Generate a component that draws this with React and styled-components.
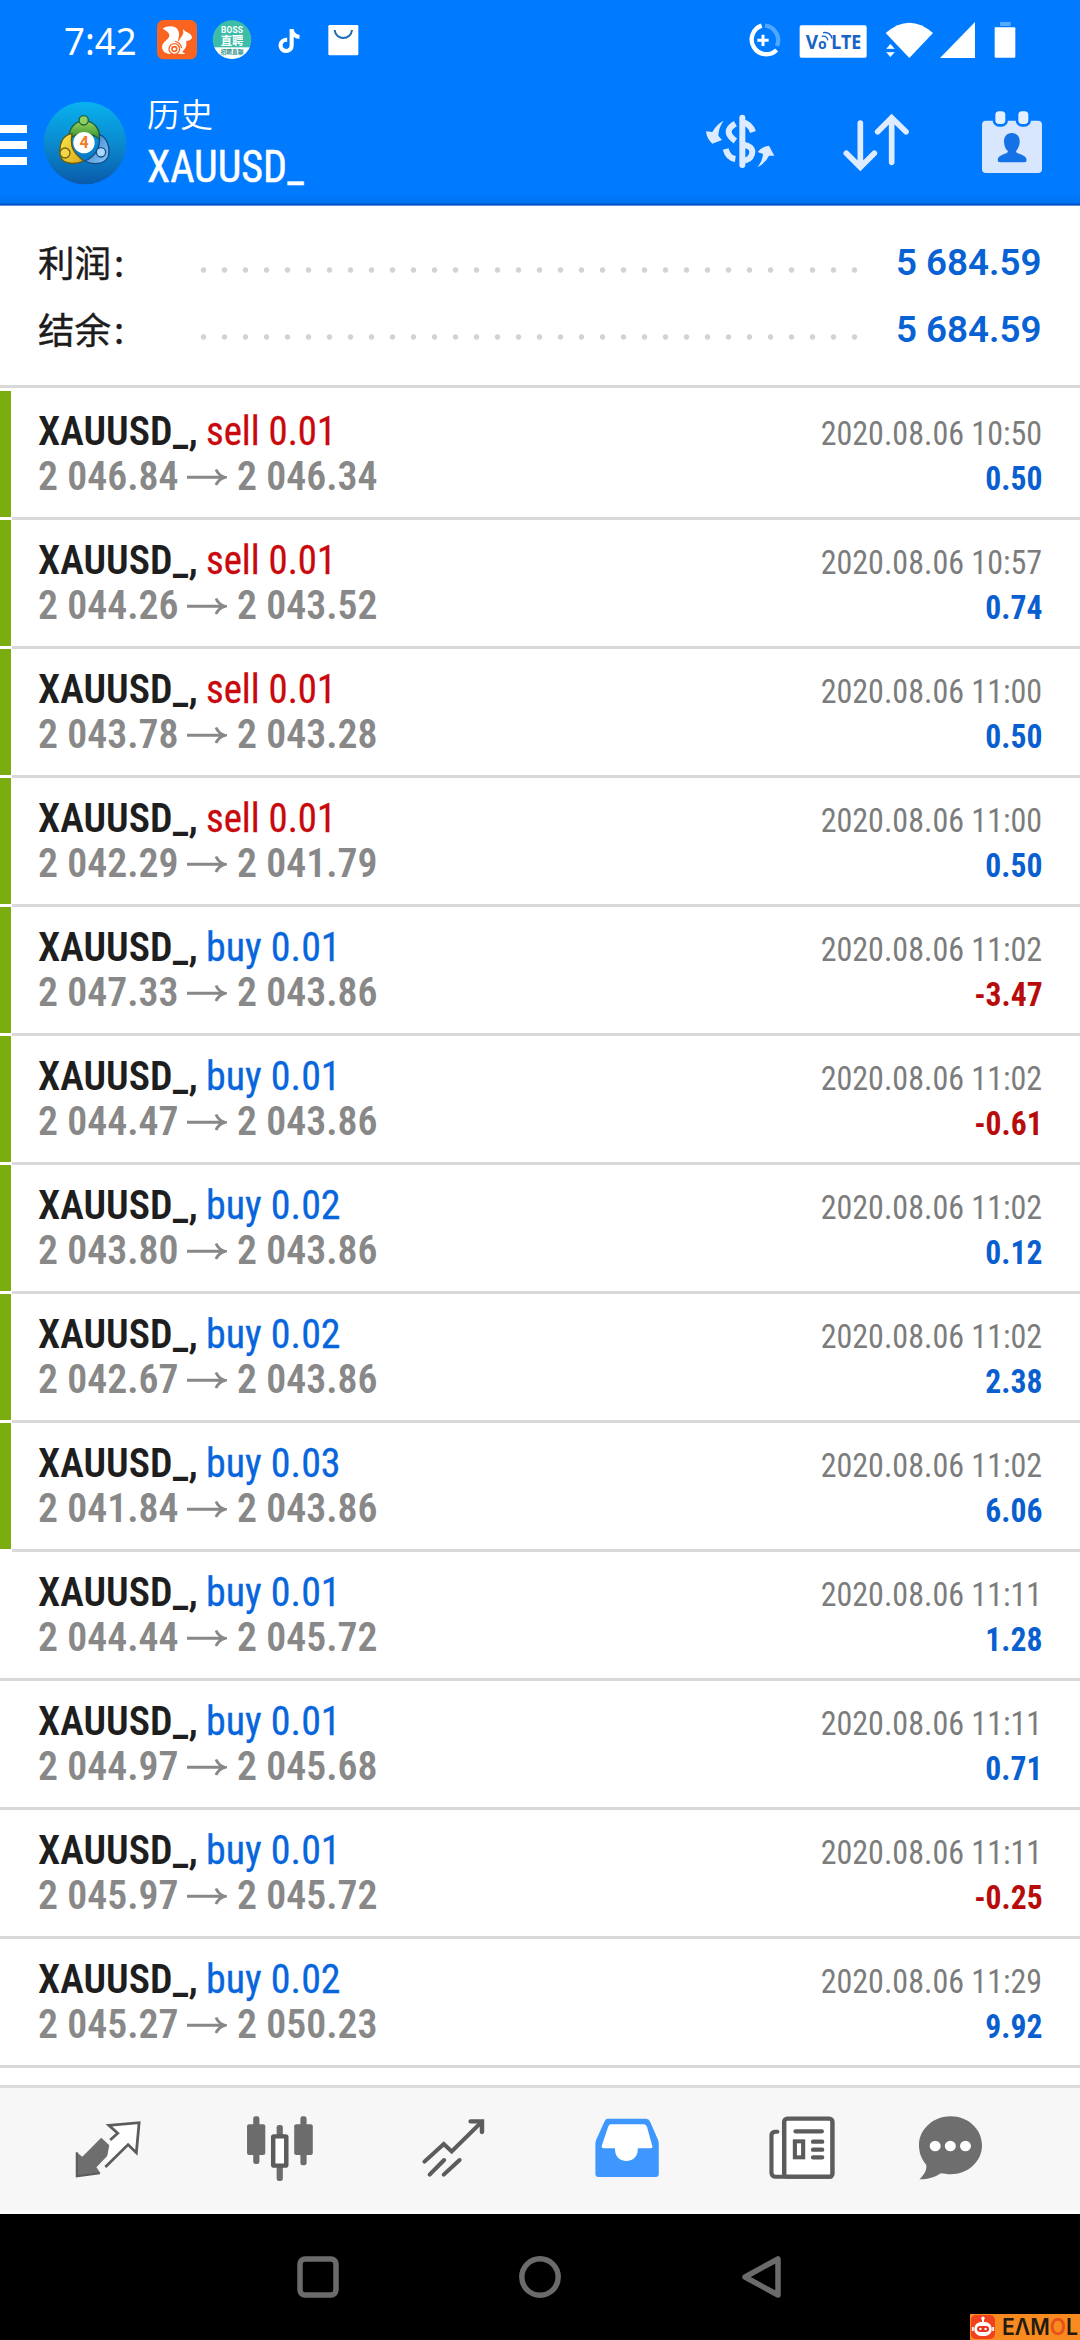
import React from "react";
import styled, { createGlobalStyle } from "styled-components";
import { FaTiktok } from "react-icons/fa6";

const GlobalStyle = createGlobalStyle`
  *, *::before, *::after { box-sizing: border-box; }
  body { margin: 0; background: #fff; }
  svg { display: block; flex: none; }
`;

const condensed = `"Roboto Condensed", Roboto, sans-serif`;

const Screen = styled.div`
  display: flex;
  flex-direction: column;
  width: 1080px;
  height: 2340px;
  overflow: hidden;
  background: #fff;
`;

/* Text drawn slightly narrower than the font's own width. */
const Squeezed = styled.span`
  display: block;
  white-space: nowrap;
  transform: scaleX(${(p) => p.$k});
  transform-origin: ${(p) => p.$from || "left"} center;
`;

/* ---------- top ---------- */
const Top = styled.header`
  display: flex;
  flex-direction: column;
  flex: none;
  height: 206px;
  color: #fff;
  background: linear-gradient(#007aff 0 193px, #0074f2 203px, #0050cc 204px 205px, #b9d3f5 206px);
`;

const StatusBar = styled.div`
  display: flex;
  align-items: center;
  height: 80px;
  padding: 0 60px 0 64px;
`;

const Clock = styled.div`
  width: 83px;
  font: 400 38.5px/80px "Noto Sans", sans-serif;
`;

const StatusApps = styled.div`
  display: flex;
  align-items: center;
`;

const NoteIcon = styled.div`
  width: 64px;
  padding: 2px 0 0 18px;
`;

const StatusSystem = styled.div`
  display: flex;
  margin-left: auto;
`;

const AppBar = styled.div`
  display: flex;
  align-items: flex-start;
  height: 125px;
`;

const Burger = styled.div`
  display: flex;
  flex-direction: column;
  gap: 8px;
  width: 43px;
  padding-top: 45px;
`;

const BurgerLine = styled.i`
  width: 27px;
  height: 8px;
  background: #fff;
`;

const Logo = styled.div`
  padding-top: 21px;
  width: 104px;
`;

const Titles = styled.div`
  display: flex;
  flex-direction: column;
  gap: 6px;
  padding-top: 13px;
`;

const Title = styled.div`
  font: 400 33px/40px "Noto Sans CJK SC", sans-serif;
  font-weight: 350;
`;

const Subtitle = styled.div`
  font: 400 44.5px/56px ${condensed};
  -webkit-text-stroke: 0.5px #fff;
`;

const Actions = styled.div`
  display: flex;
  margin-left: auto;
  width: 400px;
  padding-top: 20px;
`;

/* ---------- summary ---------- */
const Summary = styled.section`
  display: flex;
  flex-direction: column;
  flex: none;
  height: 182px;
  padding: 22px 38px 0;
  border-bottom: 3px solid #d9d9d9;
`;

const SummaryLine = styled.div`
  display: flex;
  align-items: center;
  height: 67px;
`;

const SummaryLabel = styled.div`
  display: flex;
  gap: 3px;
  width: 154.5px;
  font: 400 36.5px/60px "Noto Sans CJK SC", sans-serif;
  color: #1c1c1c;
  -webkit-text-stroke: 0.4px #1c1c1c;
`;

const Leader = styled.div`
  width: 673px;
  height: 6px;
  margin-top: 17px;
  background: radial-gradient(circle at 10.5px 3px, #d3d3d3 2.3px, transparent 3.2px) 0 0 / 21px 6px repeat-x;
`;

const SummaryValue = styled.div`
  margin-left: auto;
  font: 600 37.5px/60px Roboto, sans-serif;
  color: #0862d4;
`;

/* ---------- deals ---------- */
const Deals = styled.main`
  display: flex;
  flex-direction: column;
  flex: none;
  height: 1697px;
  padding-top: 2.5px;
`;

const Deal = styled.article`
  display: flex;
  flex: none;
  height: 129px;
`;

const Marker = styled.div`
  width: 10.5px;
  height: 126px;
  margin-right: 1.5px;
  background: ${(p) => (p.$on ? "#7aad10" : "transparent")};
`;

const DealBody = styled.div`
  display: flex;
  flex: 1;
  justify-content: space-between;
  margin-left: ${(p) => (p.$on ? 0 : "-12px")};
  padding: 18.5px 37.5px 0 ${(p) => (p.$on ? 25.5 : 37.5)}px;
  border-bottom: 3px solid #d9d9d9;
`;

const DealLeft = styled.div`
  display: flex;
  flex-direction: column;
`;

const DealLine = styled.div`
  display: flex;
  align-items: center;
  height: 45px;
  font: 400 41px/45px ${condensed};
`;

const Symbol = styled.div`
  width: 168.5px;
  font-weight: 600;
  color: #1e1e1e;
`;

const Side = styled.div`
  color: ${(p) => (p.$side === "sell" ? "#c8080c" : "#0866dc")};
  -webkit-text-stroke: 0.3px currentColor;
`;

const Price = styled.div`
  width: 149.5px;
  font-weight: 600;
  color: #888;
`;

const ArrowBox = styled.div`
  width: 50px;
`;

const DealRight = styled.div`
  display: flex;
  flex-direction: column;
  align-items: flex-end;
  padding-top: 2px;
`;

const When = styled.div`
  height: 45px;
  font: 400 34px/45px ${condensed};
  color: #7c7c7c;
`;

const Profit = styled.div`
  font: 700 34px/45px ${condensed};
  color: ${(p) => (p.$loss ? "#b80c0c" : "#0a5fd0")};
`;

/* ---------- bottom ---------- */
const TabBar = styled.nav`
  display: flex;
  flex: none;
  height: 128.5px;
  padding-left: 20.7px;
  background: #f7f7f7;
  border-top: 3px solid #dcdcdc;
  border-bottom: 4px solid #fdfdfd;
`;

const SystemNav = styled.div`
  display: flex;
  flex: 1;
  position: relative;
  justify-content: center;
  padding-top: 32.5px;
  background: #000;
`;

const NavSlot = styled.div`
  display: flex;
  justify-content: center;
  width: 222px;
`;

const Watermark = styled.div`
  position: absolute;
  right: 0;
  bottom: 0;
  display: flex;
  align-items: center;
  gap: 7px;
  width: 110px;
  height: 26px;
  padding-left: 1px;
  background: #f98a20;
`;

const Brand = styled.div`
  font: 600 22.5px/26px Inter, sans-serif;
  color: #231a12;
`;

const BrandAccent = styled.span`
  color: #e8501c;
`;

/* ---------- drawings ---------- */
const UcIcon = () => (
  <svg width="62" height="62" viewBox="440 27 186 186">
    <rect x="470" y="60" width="120" height="118" rx="20" fill="#fa6420" />
    <path
      fill="#fff"
      d="M487 86C502 76 527 76 534 92C540 106 532 118 533 126C540 116 546 108 549 100L548 88L557 95C567 99 574 104 575 112C574 120 566 123 559 122C556 128 560 134 556 142C553 149 548 152 546 156L555 162H507C490 160 483 148 486 136C489 124 506 118 507 107C508 99 500 93 487 86Z"
    />
    <circle cx="522" cy="147" r="16" fill="#fff" stroke="#fa6420" strokeWidth="4" />
    <circle cx="522" cy="147" r="7" fill="none" stroke="#fa6420" strokeWidth="5" />
    <path d="M524 124C534 126 542 134 544 144" fill="none" stroke="#fa6420" strokeWidth="4" />
  </svg>
);

const BossIcon = () => (
  <svg width="50" height="62" viewBox="626 27 150 186">
    <clipPath id="boss">
      <circle cx="695" cy="119" r="58" />
    </clipPath>
    <g clipPath="url(#boss)">
      <rect x="630" y="55" width="130" height="130" fill="#3dbda8" />
      <rect x="630" y="142" width="130" height="50" fill="#fff" />
    </g>
    <g textAnchor="middle" fontFamily="Roboto, 'Noto Sans CJK SC', sans-serif">
      <text x="695" y="99" fontSize="25" fontWeight="700" fill="#fff" textLength="66">BOSS</text>
      <text x="695" y="134" fontSize="34" fontWeight="700" fill="#fff">直聘</text>
      <text x="695" y="162" fontSize="17" fontWeight="700" fill="#2e8f86">招聘直聊</text>
    </g>
  </svg>
);

const BagIcon = () => (
  <svg width="40" height="62" viewBox="966 27 120 186">
    <rect x="982" y="75" width="90" height="91" rx="4" fill="#fff" />
    <path d="M1001 90C1004 122 1050 122 1053 90" fill="none" stroke="#1f6ab0" strokeWidth="6" />
  </svg>
);

const SystemIcons = () => (
  <svg width="280" height="60" viewBox="180 30 840 180">
    <g fill="none" strokeWidth="13">
      <path d="M290 150A44 44 0 1 1 245 77" stroke="#fff" />
      <path d="M255 77A44 44 0 0 1 291 138" stroke="#4fa8ff" />
      <path d="M249 104V138M232 121H266" stroke="#fff" strokeWidth="9" />
    </g>
    <rect x="359" y="76" width="201" height="97" rx="5" fill="#fff" />
    <g fill="#1763c6" fontFamily="'Noto Sans', sans-serif" fontWeight="700">
      <text x="377" y="147" fontSize="57" textLength="37" lengthAdjust="spacingAndGlyphs">V</text>
      <text x="414" y="147" fontSize="40" textLength="26" lengthAdjust="spacingAndGlyphs">o</text>
      <text x="454" y="147" fontSize="57" textLength="90" lengthAdjust="spacingAndGlyphs">LTE</text>
    </g>
    <path d="M425 109Q440 106 444 121M429 98Q452 95 456 116" fill="none" stroke="#1763c6" strokeWidth="4" />
    <path fill="#fff" d="M617 99Q688 37 759 99L688 174Z" />
    <path fill="#fff" d="M618 147L631 131L645 147ZM618 156H645L631 172Z" stroke="#007aff" strokeWidth="1" />
    <path fill="#fff" d="M780 174L885 66V174Z" />
    <rect x="944" y="82" width="62" height="91" rx="3" fill="#fff" />
    <rect x="960" y="66" width="32" height="12" fill="#55abff" />
  </svg>
);

const MtLogo = () => (
  <svg width="84" height="84" viewBox="129 304 252 252">
    <defs>
      <linearGradient id="sky" x1="0" y1="0" x2="0" y2="1">
        <stop offset="0" stopColor="#08b2ee" />
        <stop offset="0.55" stopColor="#0a86cc" />
        <stop offset="1" stopColor="#0a5aaa" />
      </linearGradient>
      <linearGradient id="green" x1="0" y1="0" x2="0" y2="1">
        <stop offset="0" stopColor="#9ad45c" />
        <stop offset="1" stopColor="#2f8a30" />
      </linearGradient>
      <linearGradient id="gold" x1="0" y1="0" x2="1" y2="1">
        <stop offset="0" stopColor="#ffe84a" />
        <stop offset="1" stopColor="#d9a81c" />
      </linearGradient>
      <linearGradient id="blue" x1="0" y1="0" x2="1" y2="1">
        <stop offset="0" stopColor="#2f78c8" />
        <stop offset="1" stopColor="#8ccaf6" />
      </linearGradient>
    </defs>
    <circle cx="255" cy="430" r="124" fill="url(#sky)" />
    <g strokeWidth="4">
      <path d="M208 420C204 388 222 366 251 363C282 364 302 388 299 420C280 398 228 396 208 420Z" fill="url(#green)" stroke="#1d5f38" />
      <path d="M216 402C188 406 174 434 182 472C190 494 226 496 250 484L228 462C214 448 212 425 216 402Z" fill="url(#gold)" stroke="#5f5a18" />
      <path d="M298 404C322 414 332 444 324 472C312 496 278 496 254 484C288 470 302 440 298 404Z" fill="url(#blue)" stroke="#134c88" />
      <circle cx="251" cy="362" r="14" fill="#8fd060" stroke="#1d5f38" />
      <circle cx="195" cy="460" r="15" fill="#f5d648" stroke="#6e6410" />
      <circle cx="303" cy="458" r="14" fill="#a8d8fa" stroke="#134c88" />
    </g>
    <circle cx="252" cy="429" r="32" fill="#fff" />
    <text x="252" y="446" fontSize="48" fontWeight="700" fontFamily="Roboto, sans-serif" textAnchor="middle" fill="#ee7b25">4</text>
  </svg>
);

const DollarIcon = () => (
  <svg width="133" height="80" viewBox="0 300 399 240">
    <g fill="none" stroke="#dcebff" strokeWidth="18">
      <path d="M187 353V495" strokeLinecap="round" />
      <path d="M166 371Q126 394 166 423" />
      <path d="M187 366Q211 372 219 396" />
      <path d="M187 434Q222 438 216 462Q210 482 187 482" />
      <path d="M137 447Q144 474 166 477" />
    </g>
    <path fill="#dcebff" d="M131 362Q110 372 97 396L78 394Q80 416 97 431L126 420L115 407Q116 382 131 362ZM232 502Q258 488 267 467L283 467L267 437Q245 440 233 456L249 462Q248 482 232 502Z" />
  </svg>
);

const SortIcon = () => (
  <svg width="134" height="80" viewBox="399 300 402 240">
    <path
      d="M541 369V500M499 460L541 502L583 460M635 487V354M593 395L635 353L678 395"
      fill="none"
      stroke="#dfecff"
      strokeWidth="17"
      strokeLinecap="round"
    />
  </svg>
);

const CalendarIcon = () => (
  <svg width="133" height="80" viewBox="801 300 399 240">
    <rect x="906" y="362" width="180" height="157" rx="12" fill="#d8e7fd" />
    <g fill="#e4efff" stroke="#007aff" strokeWidth="8">
      <rect x="942" y="330" width="38" height="46" rx="15" />
      <rect x="1011" y="330" width="38" height="46" rx="15" />
    </g>
    <path
      fill="#1472e6"
      d="M995 399C1012 399 1020 412 1019 427C1018 441 1012 448 1008 454C1008 464 1039 462 1040 480Q1040 487 1033 487H960Q953 487 953 480C954 462 984 464 984 454C978 448 973 441 972 427C971 412 979 399 995 399Z"
    />
  </svg>
);

const LongArrow = () => (
  <svg width="40" height="20" viewBox="0 0 40 20">
    <path d="M0 10.3H38M29 2.5Q31.5 8.5 38 10.3Q31.5 12 29 18" fill="none" stroke="#888" strokeWidth="2.9" />
  </svg>
);

/* Every tab drawing shares one cell size; x is the cell's left edge. */
const Tab = ({ x, children }) => (
  <svg
    width="173.55"
    height="121.5"
    viewBox={`${x} 84 504 364.5`}
    preserveAspectRatio="none"
    fill="none"
    stroke="#5c5c5c"
  >
    {children}
  </svg>
);

const NavShape = ({ children }) => (
  <svg width="62" height="62" viewBox="0 0 62 62" fill="none" stroke="#6b6b6b" strokeWidth="5.5" strokeLinejoin="round">
    {children}
  </svg>
);

const Robot = () => (
  <svg width="24" height="24" viewBox="0 0 24 24">
    <rect x="0" y="0" width="24" height="24" rx="5" fill="#f0421c" />
    <path d="M12 3V8" stroke="#fff" strokeWidth="2" />
    <circle cx="12" cy="3.2" r="1.7" fill="#fff" />
    <rect x="3.2" y="7" width="17.6" height="14" rx="7" fill="#fff" />
    <path d="M1.8 12V16M22.2 12V16" stroke="#fff" strokeWidth="1.8" />
    <rect x="6" y="11" width="12" height="6" rx="3" fill="#e8321c" />
    <circle cx="9.4" cy="14" r="1.2" fill="#fff" />
    <circle cx="14.6" cy="14" r="1.2" fill="#fff" />
  </svg>
);

const deals = [
  ["sell", "0.01", "2 046.84", "2 046.34", "10:50", "0.50", true],
  ["sell", "0.01", "2 044.26", "2 043.52", "10:57", "0.74", true],
  ["sell", "0.01", "2 043.78", "2 043.28", "11:00", "0.50", true],
  ["sell", "0.01", "2 042.29", "2 041.79", "11:00", "0.50", true],
  ["buy", "0.01", "2 047.33", "2 043.86", "11:02", "-3.47", true],
  ["buy", "0.01", "2 044.47", "2 043.86", "11:02", "-0.61", true],
  ["buy", "0.02", "2 043.80", "2 043.86", "11:02", "0.12", true],
  ["buy", "0.02", "2 042.67", "2 043.86", "11:02", "2.38", true],
  ["buy", "0.03", "2 041.84", "2 043.86", "11:02", "6.06", true],
  ["buy", "0.01", "2 044.44", "2 045.72", "11:11", "1.28", false],
  ["buy", "0.01", "2 044.97", "2 045.68", "11:11", "0.71", false],
  ["buy", "0.01", "2 045.97", "2 045.72", "11:11", "-0.25", false],
  ["buy", "0.02", "2 045.27", "2 050.23", "11:29", "9.92", false],
];

const totals = [
  ["利润", "5 684.59"],
  ["结余", "5 684.59"],
];

export default function App() {
  return (
    <Screen>
      <GlobalStyle />
      <Top>
        <StatusBar>
          <Clock>
            <Squeezed $k={0.95}>7:42</Squeezed>
          </Clock>
          <StatusApps>
            <UcIcon />
            <BossIcon />
            <NoteIcon>
              <FaTiktok size={24} />
            </NoteIcon>
            <BagIcon />
          </StatusApps>
          <StatusSystem>
            <SystemIcons />
          </StatusSystem>
        </StatusBar>
        <AppBar>
          <Burger>
            <BurgerLine />
            <BurgerLine />
            <BurgerLine />
          </Burger>
          <Logo>
            <MtLogo />
          </Logo>
          <Titles>
            <Title>历史</Title>
            <Subtitle>
              <Squeezed $k={0.945}>XAUUSD_</Squeezed>
            </Subtitle>
          </Titles>
          <Actions>
            <DollarIcon />
            <SortIcon />
            <CalendarIcon />
          </Actions>
        </AppBar>
      </Top>

      <Summary>
        {totals.map(([label, value]) => (
          <SummaryLine key={label}>
            <SummaryLabel>
              <span>{label}</span>
              <span>:</span>
            </SummaryLabel>
            <Leader />
            <SummaryValue>
              <Squeezed $k={0.98} $from="right">{value}</Squeezed>
            </SummaryValue>
          </SummaryLine>
        ))}
      </Summary>

      <Deals>
        {deals.map(([side, volume, open, close, time, profit, marked], i) => (
          <Deal key={i}>
            <Marker $on={marked} />
            <DealBody $on={marked}>
              <DealLeft>
                <DealLine>
                  <Symbol>
                    <Squeezed $k={0.97}>XAUUSD_,</Squeezed>
                  </Symbol>
                  <Side $side={side}>
                    <Squeezed $k={side === "sell" ? 0.945 : 0.975}>{`${side} ${volume}`}</Squeezed>
                  </Side>
                </DealLine>
                <DealLine>
                  <Price>
                    <Squeezed $k={0.97}>{open}</Squeezed>
                  </Price>
                  <ArrowBox>
                    <LongArrow />
                  </ArrowBox>
                  <Price>
                    <Squeezed $k={0.97}>{close}</Squeezed>
                  </Price>
                </DealLine>
              </DealLeft>
              <DealRight>
                <When>
                  <Squeezed $k={0.942} $from="right">{`2020.08.06 ${time}`}</Squeezed>
                </When>
                <Profit $loss={profit.startsWith("-")}>
                  <Squeezed $k={0.93} $from="right">{profit}</Squeezed>
                </Profit>
              </DealRight>
            </DealBody>
          </Deal>
        ))}
      </Deals>

      <TabBar>
        <Tab x={60}>
          <path d="M293 233L329 268L279 322L291 340L222 350V277L238 290Z" fill="#6e6e6e" stroke="none" />
          <path d="M222 277V349L289 340" strokeWidth="6" />
          <path d="M319 240L341 220L315 198L403 187L395 278L371 254L305 321" fill="#fff" stroke="none" />
          <path d="M319 240L341 220L315 196L403 188L395 278L371 254L305 321" strokeWidth="8" />
        </Tab>
        <Tab x={564}>
          <g fill="#6c6c6c" stroke="none">
            <rect x="736" y="169" width="18" height="143" rx="7" />
            <rect x="718" y="193" width="53" height="92" rx="6" />
            <rect x="873" y="169" width="18" height="147" rx="7" />
            <rect x="855" y="193" width="54" height="92" rx="6" />
            <rect x="804" y="195" width="18" height="168" rx="7" />
          </g>
          <rect x="794" y="229" width="38" height="88" rx="2" fill="#fff" strokeWidth="13" />
        </Tab>
        <Tab x={1068}>
          <path d="M1232 305L1288 252L1311 274L1396 188M1247 344L1289 300M1288 344L1334 300" strokeWidth="12" strokeLinecap="round" />
          <path d="M1366 184H1399V216" strokeWidth="13" strokeLinecap="round" />
        </Tab>
        <Tab x={4}>
          <path
            d="M198 176H309Q317 176 321 185L344 240Q346 246 346 252V342Q346 351 337 351H171Q162 351 162 342V252Q162 246 164 240L189 183Q192 176 198 176Z"
            fill="#3d97ff"
            stroke="none"
          />
          <path d="M207 193H303Q309 194 312 201L328 261Q327 265 321 265H285V270C284 314 220 314 219 270V265H185Q179 264 180 259L199 200Q202 193 207 193Z" fill="#fff" stroke="none" />
        </Tab>
        <Tab x={508}>
          <path d="M689 215H683Q672 216 672 226V340Q674 350 684 350H845" strokeWidth="12" strokeLinecap="round" fill="#fff" />
          <rect x="709" y="176" width="140" height="174" rx="9" strokeWidth="13" fill="#fff" />
          <path d="M742 214H818M793 245H819M793 269H819M793 292H819" strokeWidth="13" strokeLinecap="round" />
          <rect x="740" y="244" width="24" height="48" strokeWidth="12" fill="#fff" />
        </Tab>
        <Tab x={1012}>
          <path
            d="M1194 169C1244 169 1285 207 1285 256C1285 305 1244 343 1194 343C1184 343 1174 341 1165 340C1148 352 1128 358 1103 358C1115 346 1126 332 1123 314C1110 299 1102 279 1102 256C1102 207 1144 169 1194 169Z"
            fill="#6e6e6e"
            stroke="none"
          />
          <g fill="#fff" stroke="none">
            <circle cx="1149" cy="258" r="16" />
            <circle cx="1193" cy="258" r="16" />
            <circle cx="1237" cy="258" r="16" />
          </g>
        </Tab>
      </TabBar>

      <SystemNav>
        <NavSlot>
          <NavShape>
            <rect x="13" y="13" width="36" height="36" rx="5" />
          </NavShape>
        </NavSlot>
        <NavSlot>
          <NavShape>
            <circle cx="31" cy="31" r="18.2" />
          </NavShape>
        </NavSlot>
        <NavSlot>
          <NavShape>
            <path d="M14 31L47 13V49Z" />
          </NavShape>
        </NavSlot>
        <Watermark>
          <Robot />
          <Brand>
            <Squeezed $k={0.94}>
              EΛM<BrandAccent>O</BrandAccent>L
            </Squeezed>
          </Brand>
        </Watermark>
      </SystemNav>
    </Screen>
  );
}
